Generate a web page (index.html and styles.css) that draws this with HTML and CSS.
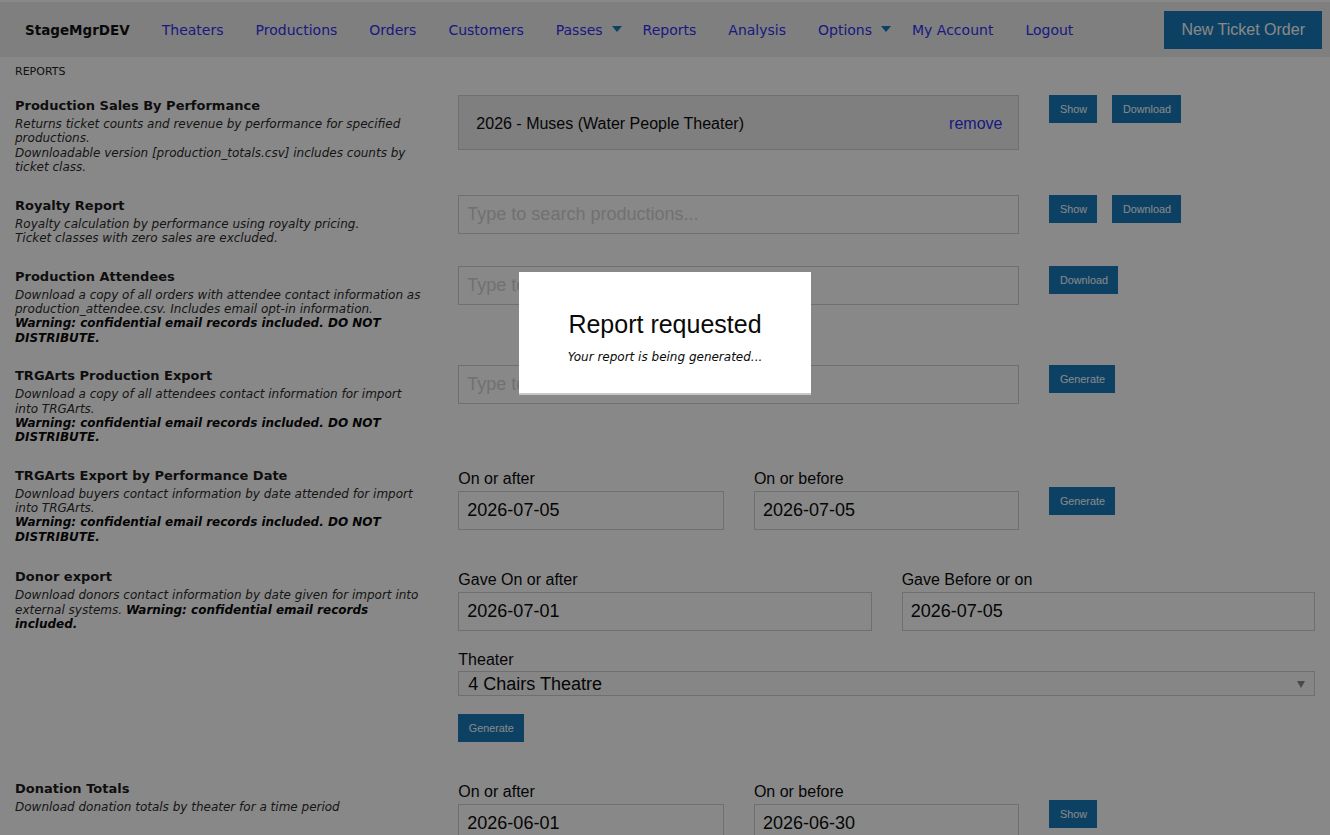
FILE: index.html
```html
<!DOCTYPE html>
<html lang="en">
<head>
    <meta charset="UTF-8">
    <meta name="viewport" content="width=device-width, initial-scale=1.0">
    <title>Reports - StageMgrDEV</title>
    <link rel="stylesheet" href="styles.css">
</head>
<body>

    <nav class="top-bar">
        <div class="brand">StageMgrDEV</div>
        <ul class="menu">
            <li><a href="#">Theaters</a></li>
            <li><a href="#">Productions</a></li>
            <li><a href="#">Orders</a></li>
            <li><a href="#">Customers</a></li>
            <li class="has-drop"><a href="#">Passes</a></li>
            <li><a href="#">Reports</a></li>
            <li><a href="#">Analysis</a></li>
            <li class="has-drop"><a href="#">Options</a></li>
            <li><a href="#">My Account</a></li>
            <li><a href="#">Logout</a></li>
        </ul>
        <a class="order-button" href="#">New Ticket Order</a>
    </nav>

    <main class="page">
        <div class="crumb">REPORTS</div>

        <section class="report-row">
            <div class="report-info">
                <h4>Production Sales By Performance</h4>
                <p>Returns ticket counts and revenue by performance for specified productions.<br>
                Downloadable version [production_totals.csv] includes counts by ticket class.</p>
            </div>
            <div class="report-controls">
                <div class="span-8">
                    <div class="picked">
                        <span>2026 - Muses (Water People Theater)</span>
                        <a href="#">remove</a>
                    </div>
                </div>
                <div class="span-4 actions">
                    <button class="tiny">Show</button>
                    <button class="tiny">Download</button>
                </div>
            </div>
        </section>

        <section class="report-row">
            <div class="report-info">
                <h4>Royalty Report</h4>
                <p>Royalty calculation by performance using royalty pricing.<br>
                Ticket classes with zero sales are excluded.</p>
            </div>
            <div class="report-controls">
                <div class="span-8">
                    <input type="text" class="field" placeholder="Type to search productions...">
                </div>
                <div class="span-4 actions">
                    <button class="tiny">Show</button>
                    <button class="tiny">Download</button>
                </div>
            </div>
        </section>

        <section class="report-row">
            <div class="report-info">
                <h4>Production Attendees</h4>
                <p>Download a copy of all orders with attendee contact information as production_attendee.csv. Includes email opt-in information.<br>
                <b>Warning: confidential email records included. DO NOT DISTRIBUTE.</b></p>
            </div>
            <div class="report-controls">
                <div class="span-8">
                    <input type="text" class="field" placeholder="Type to search productions...">
                </div>
                <div class="span-4 actions">
                    <button class="tiny">Download</button>
                </div>
            </div>
        </section>

        <section class="report-row">
            <div class="report-info">
                <h4>TRGArts Production Export</h4>
                <p>Download a copy of all attendees contact information for import into TRGArts.<br>
                <b>Warning: confidential email records included. DO NOT DISTRIBUTE.</b></p>
            </div>
            <div class="report-controls">
                <div class="span-8">
                    <input type="text" class="field" placeholder="Type to search productions...">
                </div>
                <div class="span-4 actions">
                    <button class="tiny">Generate</button>
                </div>
            </div>
        </section>

        <section class="report-row">
            <div class="report-info">
                <h4>TRGArts Export by Performance Date</h4>
                <p>Download buyers contact information by date attended for import into TRGArts.<br>
                <b>Warning: confidential email records included. DO NOT DISTRIBUTE.</b></p>
            </div>
            <div class="report-controls">
                <div class="span-4">
                    <label>On or after</label>
                    <input type="text" class="field" value="2026-07-05">
                </div>
                <div class="span-4">
                    <label>On or before</label>
                    <input type="text" class="field" value="2026-07-05">
                </div>
                <div class="span-4 actions dated">
                    <button class="tiny">Generate</button>
                </div>
            </div>
        </section>

        <section class="report-row spaced">
            <div class="report-info">
                <h4>Donor export</h4>
                <p>Download donors contact information by date given for import into external systems. <b>Warning: confidential email records included.</b></p>
            </div>
            <div class="report-controls">
                <div class="span-6">
                    <label>Gave On or after</label>
                    <input type="text" class="field" value="2026-07-01">
                </div>
                <div class="span-6">
                    <label>Gave Before or on</label>
                    <input type="text" class="field" value="2026-07-05">
                </div>
                <div class="span-12">
                    <label class="select-label">Theater</label>
                    <div class="select-wrap">
                        <select class="picker">
                            <option>4 Chairs Theatre</option>
                        </select>
                    </div>
                </div>
                <div class="span-12">
                    <button class="tiny block-end">Generate</button>
                </div>
            </div>
        </section>

        <section class="report-row">
            <div class="report-info">
                <h4>Donation Totals</h4>
                <p>Download donation totals by theater for a time period</p>
            </div>
            <div class="report-controls">
                <div class="span-4">
                    <label>On or after</label>
                    <input type="text" class="field" value="2026-06-01">
                </div>
                <div class="span-4">
                    <label>On or before</label>
                    <input type="text" class="field" value="2026-06-30">
                </div>
                <div class="span-4 actions dated">
                    <button class="tiny">Show</button>
                </div>
            </div>
        </section>
    </main>

    <div class="reveal-overlay"></div>
    <div class="reveal">
        <h2>Report requested</h2>
        <p>Your report is being generated...</p>
    </div>

</body>
</html>
```

FILE: styles.css
```css
html {
    overflow: hidden;
}
body {
    margin: 0;
    background-color: #fefefe;
    color: #0a0a0a;
    font-family: 'Liberation Sans', Arial, sans-serif;
}
a {
    color: #3030f0;
    text-decoration: none;
}

/* top navigation */
.top-bar {
    display: flex;
    align-items: center;
    height: 55px;
    margin-top: 2px;
    background-color: #ececec;
}
.brand {
    padding: 0 16px 0 25px;
    font-family: 'DejaVu Sans', Verdana, sans-serif;
    font-weight: bold;
    font-size: 13.5px;
    color: #111;
}
.menu {
    display: flex;
    list-style: none;
    margin: 0;
    padding: 0;
}
.menu a {
    display: block;
    padding: 0 16px;
    font-family: 'DejaVu Sans', Verdana, sans-serif;
    font-size: 14px;
    line-height: 20px;
}
.menu .has-drop a {
    padding-right: 5px;
}
.menu .has-drop a::after {
    content: '';
    display: inline-block;
    margin-left: 9px;
    vertical-align: 3px;
    border-style: solid;
    border-width: 6px 5px 0 5px;
    border-color: #1779ba transparent transparent transparent;
}
.order-button {
    margin-left: auto;
    margin-right: 8px;
    padding: 0 17px;
    line-height: 38px;
    font-size: 16px;
    color: #fefefe;
    background-color: #1779ba;
}

/* page */
.page {
    padding-top: 7px;
}
.crumb {
    padding-left: 15px;
    font-family: 'DejaVu Sans', Verdana, sans-serif;
    font-size: 11px;
    line-height: 16px;
    color: #222;
    margin-bottom: 15px;
}
.report-row {
    display: grid;
    grid-template-columns: 1fr 2fr;
    margin-bottom: 20px;
}
.report-row.spaced {
    padding-top: 2px;
}
.report-info {
    padding: 0 19px 0 15px;
    font-family: 'DejaVu Sans', Verdana, sans-serif;
}
.report-info h4 {
    margin: 0;
    font-size: 13px;
    line-height: 22px;
    color: #1a1a1a;
}
.report-info p {
    margin: 0;
    font-size: 12px;
    line-height: 1.2;
    font-style: italic;
    color: #2a2a2a;
}
.report-info b {
    color: #0a0a0a;
}
.report-controls {
    display: grid;
    grid-template-columns: repeat(12, 1fr);
    align-items: start;
}
.report-controls > div {
    padding: 0 15px;
}
.span-4 { grid-column: span 4; }
.span-6 { grid-column: span 6; }
.span-8 { grid-column: span 8; }
.span-12 { grid-column: span 12; }

.actions {
    display: flex;
    gap: 15px;
}
.actions.dated {
    padding-top: 22px !important;
}
label {
    display: block;
    padding-top: 2px;
    font-size: 16px;
    line-height: 24px;
    color: #0a0a0a;
}
.field {
    display: block;
    box-sizing: border-box;
    width: 100%;
    height: 39px;
    margin: 0 0 12px;
    padding: 0 8px;
    border: 1px solid #cfcfcf;
    background-color: #fefefe;
    font-family: 'Liberation Sans', Arial, sans-serif;
    font-size: 18px;
    color: #0a0a0a;
}
.field::placeholder {
    color: #d2d2d2;
}
.picked {
    display: flex;
    justify-content: space-between;
    align-items: center;
    box-sizing: border-box;
    height: 55px;
    padding: 3px 16px 0 17px;
    border: 1px solid #cfcfcf;
    background-color: #ededed;
    font-size: 16px;
}
.tiny {
    padding: 0 10.5px;
    height: 28px;
    border: none;
    background-color: #1779ba;
    color: #fefefe;
    font-family: 'Liberation Sans', Arial, sans-serif;
    font-size: 10.8px;
    cursor: pointer;
}
.tiny.block-end {
    margin-bottom: 16px;
}
.select-label {
    padding-top: 6px;
    line-height: 22px;
}
.select-wrap {
    position: relative;
    margin-bottom: 18px;
}
.select-wrap::after {
    content: '';
    position: absolute;
    right: 10px;
    top: 10px;
    border-style: solid;
    border-width: 7px 4px 0 4px;
    border-color: #8a8a8a transparent transparent transparent;
}
.picker {
    display: block;
    width: 100%;
    height: 25px;
    padding: 0 9px;
    border: 1px solid #cfcfcf;
    border-radius: 0;
    background-color: #fafafa;
    appearance: none;
    font-family: 'Liberation Sans', Arial, sans-serif;
    font-size: 18px;
    color: #0a0a0a;
}

/* modal */
.reveal-overlay {
    position: fixed;
    top: 0;
    left: 0;
    right: 0;
    bottom: 0;
    background-color: rgba(0, 0, 0, 0.463);
}
.reveal {
    position: fixed;
    top: 272px;
    left: 50%;
    transform: translateX(-50%);
    box-sizing: border-box;
    width: 292px;
    height: 123px;
    padding-top: 37px;
    background-color: #fff;
    border-bottom: 2px solid #c8c8c8;
    text-align: center;
}
.reveal h2 {
    margin: 0;
    font-size: 25px;
    font-weight: normal;
    line-height: 30px;
    color: #0a0a0a;
}
.reveal p {
    margin: 10px 0 0;
    font-family: 'DejaVu Sans', Verdana, sans-serif;
    font-size: 12px;
    font-style: italic;
    line-height: 16px;
    color: #0a0a0a;
}
```
